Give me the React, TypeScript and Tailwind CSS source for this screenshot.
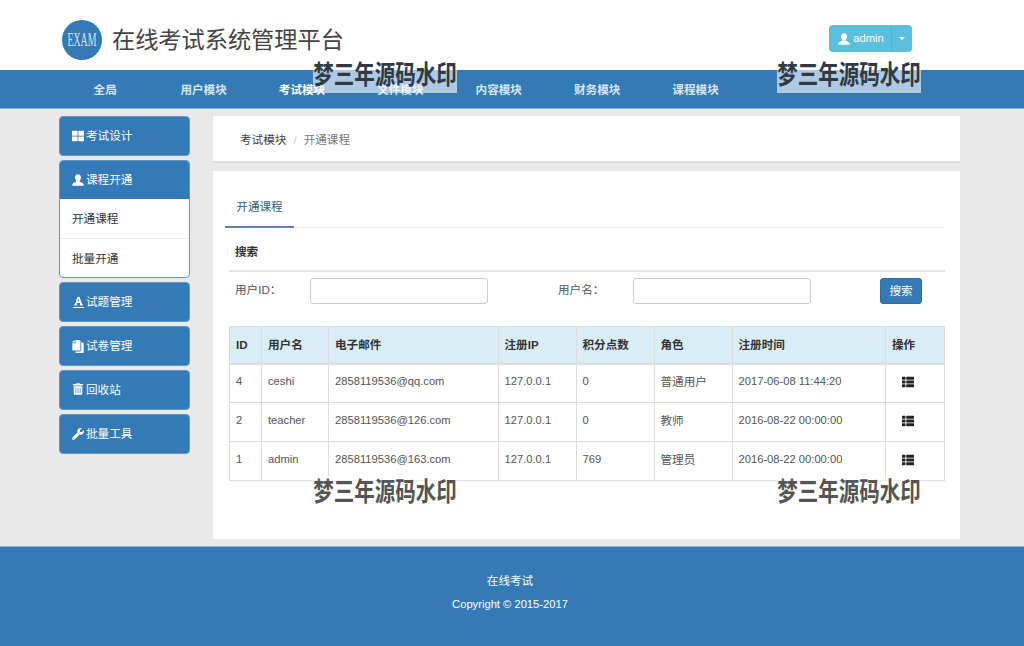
import React from 'react'
import { FaThLarge, FaThList, FaTrashAlt, FaWrench, FaCopy, FaFont } from 'react-icons/fa'

const font = { fontFamily: '"Liberation Sans", "Noto Sans CJK SC", sans-serif' }

const navItems = ['全局', '用户模块', '考试模块', '文件模块', '内容模块', '财务模块', '课程模块']

const rows = [
  ['4', 'ceshi', '2858119536@qq.com', '127.0.0.1', '0', '普通用户', '2017-06-08 11:44:20'],
  ['2', 'teacher', '2858119536@126.com', '127.0.0.1', '0', '教师', '2016-08-22 00:00:00'],
  ['1', 'admin', '2858119536@163.com', '127.0.0.1', '769', '管理员', '2016-08-22 00:00:00'],
]

const heads = ['ID', '用户名', '电子邮件', '注册IP', '积分点数', '角色', '注册时间', '操作']

const UserIcon = () => (
  <svg viewBox="0 0 12 12" className="w-[12px] h-[12px] shrink-0" fill="currentColor">
    <path d="M6 .3C4.2.3 3 1.7 3 3.6c0 1.3.6 2.5 1.3 3.1v1C2.9 8.400.7 9 .3 10.400V11.800h11.400v-1.400c-.4-1.400-2.600-2-4-2.700v-1C8.400 6.100 9 4.900 9 3.600 9 1.700 7.800.3 6 .3z" />
  </svg>
)

const SideCard = ({ icon, label }: { icon: React.ReactNode; label: string }) => (
  <div className="h-[40px] flex items-center gap-[2px] pl-[12px] bg-[#337ab7] border border-[#5f97c8] rounded-[4px] text-white">
    <span className="w-[12px] flex justify-center">{icon}</span>
    <span>{label}</span>
  </div>
)

const Watermark = ({ className }: { className: string }) => (
  <div className={`absolute w-[144px] h-[34px] flex items-center justify-center whitespace-nowrap text-[20.500px] font-bold pointer-events-none bg-white/60 ${className}`}>
    <span className="scale-y-[1.3] -translate-y-[1px]">梦三年源码水印</span>
  </div>
)

export default function App() {
  return (
    <div className="relative w-[1024px] h-[646px] overflow-hidden flex flex-col bg-[#e9e9e9] text-[#333] text-[11.6px]" style={font}>
      <header className="h-[70px] bg-white flex items-center justify-between pt-[10px] pl-[62px] pr-[112px] shrink-0">
        <div className="flex items-center gap-[10px]">
          <div className="w-[40px] h-[40px] rounded-full bg-[#337ab7] flex items-center justify-center overflow-hidden">
            <span className="text-[#d6e6f4] text-[19px] scale-x-[0.52] whitespace-nowrap" style={{ fontFamily: '"Liberation Serif", serif' }}>EXAM</span>
          </div>
          <h1 className="text-[23.200px] text-[#444] font-normal pt-[1px]">在线考试系统管理平台</h1>
        </div>
        <div className="flex h-[27px] -mt-[3px] rounded-[4px] overflow-hidden bg-[#5bc0de] text-white text-[11.200px]">
          <div className="w-[63px] flex items-center justify-center gap-[3px] pl-[2px] border-r border-[#46b8da]">
            <UserIcon />
            <span>admin</span>
          </div>
          <div className="w-[20px] flex items-center justify-center">
            <span className="w-0 h-0 border-l-[3px] border-r-[3px] border-t-[3px] border-l-transparent border-r-transparent border-t-white" />
          </div>
        </div>
      </header>

      <nav className="h-[39px] bg-[#337ab7] border-b border-[#8fb4d6] shrink-0 flex pl-[56px] pt-[2px] font-bold">
        {navItems.map((item, i) => (
          <div key={item} className={`w-[98.400px] flex items-center justify-center ${i === 2 ? 'text-white' : 'text-[#d9e6f2]'}`}>
            {item}
          </div>
        ))}
      </nav>

      <div className="flex-1 flex pl-[59px] pr-[64px] pt-[7px] gap-[23px] min-h-0">
        <aside className="w-[131px] shrink-0 flex flex-col gap-[4px]">
          <SideCard icon={<FaThLarge className="w-[12px] h-[12px]" />} label="考试设计" />
          <div className="rounded-[4px] border border-[#5f97c8] overflow-hidden bg-white">
            <div className="h-[39px] -mx-px -mt-px flex items-center gap-[2px] pl-[13px] bg-[#337ab7] text-white">
              <span className="w-[12px] flex justify-center"><UserIcon /></span>
              <span>课程开通</span>
            </div>
            <div className="h-[40px] flex items-center pl-[12px] pt-[1px] border-b border-[#eee]">开通课程</div>
            <div className="h-[38px] flex items-center pl-[12px] pt-[1px]">批量开通</div>
          </div>
          <SideCard
            icon={
              <span className="flex flex-col items-center border-b-[1.500px] border-white pb-[1px]">
                <FaFont className="w-[11px] h-[10px]" />
              </span>
            }
            label="试题管理"
          />
          <SideCard icon={<FaCopy className="w-[12px] h-[13px] shrink-0 -scale-x-100" />} label="试卷管理" />
          <SideCard icon={<FaTrashAlt className="w-[10px] h-[12px] -mt-[2px]" />} label="回收站" />
          <SideCard icon={<FaWrench className="w-[12px] h-[12px]" />} label="批量工具" />
        </aside>

        <main className="flex-1 flex flex-col gap-[8px] min-w-0">
          <div className="h-[47px] bg-white border-b-2 border-[#dedede] flex items-center gap-[7px] pl-[27px] pt-[2px]">
            <span className="text-[#444]">考试模块</span>
            <span className="text-[#ccc]">/</span>
            <span className="text-[#777]">开通课程</span>
          </div>

          <div className="h-[368px] bg-white pt-[16px] pl-[12px] pr-[15px]">
            <div className="h-[41px] border-b border-[#eee] flex">
              <div className="w-[69px] h-[41px] border-b-2 border-[#5a82b4] flex items-center justify-center text-[#2e5f8a]">开通课程</div>
            </div>
            <div className="ml-[4px]">
              <div className="h-[44px] flex items-center pl-[6px] pt-[5px] border-b-2 border-[#e5e5e5] font-bold">搜索</div>
              <div className="h-[26px] mt-[6px] flex items-center pl-[6px] text-[#555]">
                <label className="w-[75px] pb-[3px]">用户ID：</label>
                <input className="w-[178px] h-[26px] border border-[#ccc] rounded-[3px] bg-white" />
                <label className="ml-[70px] w-[75px] pb-[3px]">用户名：</label>
                <input className="w-[178px] h-[26px] border border-[#ccc] rounded-[3px] bg-white" />
                <button className="ml-[69px] w-[42px] h-[26px] bg-[#337ab7] border border-[#2e6da4] rounded-[3px] text-white">搜索</button>
              </div>

              <table className="mt-[22px] w-[715px] table-fixed border-collapse">
                <colgroup>
                  <col className="w-[32px]" />
                  <col className="w-[67px]" />
                  <col className="w-[169.500px]" />
                  <col className="w-[78px]" />
                  <col className="w-[78px]" />
                  <col className="w-[78px]" />
                  <col className="w-[153.500px]" />
                  <col className="w-[59px]" />
                </colgroup>
                <thead>
                  <tr className="h-[37px] bg-[#d9edf7]">
                    {heads.map((h) => (
                      <th key={h} className="border border-[#ddd] border-b-2 px-[6px] text-left font-bold text-[#333]">{h}</th>
                    ))}
                  </tr>
                </thead>
                <tbody>
                  {rows.map((row) => (
                    <tr key={row[0]} className="h-[39px]">
                      {row.map((cell, i) => (
                        <td key={i} className={`border border-[#ddd] px-[6px] pb-[3px] text-[#555] ${i === 5 ? '' : 'text-[11.200px]'}`}>{cell}</td>
                      ))}
                      <td className="border border-[#ddd] pb-[2px] text-[#222]">
                        <FaThList className="w-[12px] h-[12px] ml-[16px]" />
                      </td>
                    </tr>
                  ))}
                </tbody>
              </table>
            </div>
          </div>
        </main>
      </div>

      <footer className="h-[100px] shrink-0 bg-[#337ab7] border-t border-[#8fb4d6] flex flex-col items-center pt-[25px] pr-[4px] text-white gap-[7px]">
        <div>在线考试</div>
        <div className="text-[11.200px]">Copyright © 2015-2017</div>
      </footer>

      <Watermark className="left-[313px] top-[59px] text-[#2f3a45]" />
      <Watermark className="left-[777px] top-[59px] text-[#2f3a45]" />
      <Watermark className="left-[313px] top-[476px] text-[#555]" />
      <Watermark className="left-[777px] top-[476px] text-[#555]" />
    </div>
  )
}
